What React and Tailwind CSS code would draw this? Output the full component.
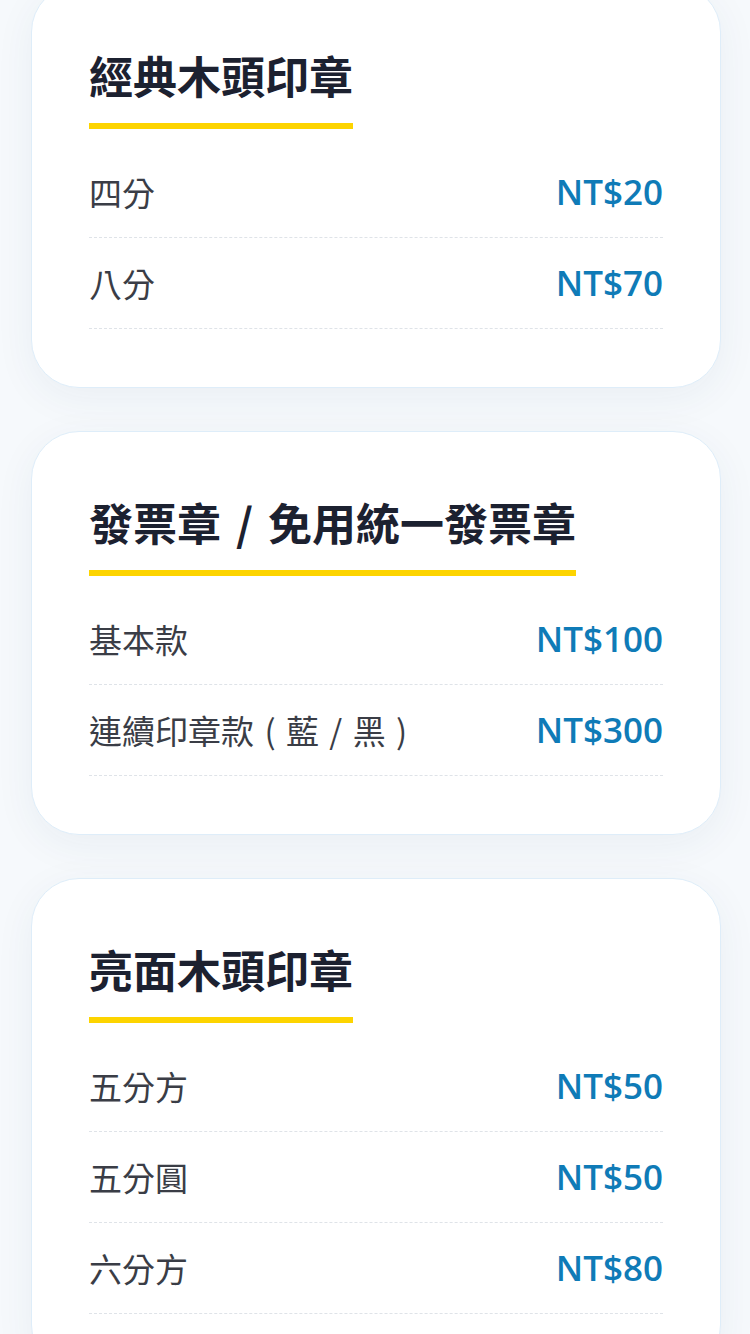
import React from "react";

const sections = [
  {
    title: "經典木頭印章",
    items: [
      ["四分", "NT$20"],
      ["八分", "NT$70"],
    ],
  },
  {
    title: "發票章 / 免用統一發票章",
    items: [
      ["基本款", "NT$100"],
      ["連續印章款 ( 藍 / 黑 )", "NT$300"],
    ],
  },
  {
    title: "亮面木頭印章",
    items: [
      ["五分方", "NT$50"],
      ["五分圓", "NT$50"],
      ["六分方", "NT$80"],
    ],
  },
];

const cjk = { fontFamily: '"Noto Sans CJK TC", "Noto Sans", sans-serif' };
const num = { fontFamily: '"Open Sans", "Noto Sans", sans-serif' };

export default function App() {
  return (
    <div className="w-[750px] h-[1334px] overflow-hidden bg-[#f6f9fc]">
      <div className="flex flex-col gap-[43px] pl-[31px] pr-[29px] mt-[-16px]">
        {sections.map((s) => (
          <div
            key={s.title}
            className="bg-white rounded-[48px] border border-[#deedf9] shadow-[0_10px_40px_rgba(30,60,100,0.06)] px-[57px] pt-[57px] pb-[58px]"
          >
            <div className="flex">
              <h2
                style={cjk}
                className="text-[44px] leading-[66px] font-bold text-[#1c2130] pb-[15px] border-b-[6px] border-[#fdd400] [word-spacing:5px]"
              >
                {s.title}
              </h2>
            </div>
            <div className="mt-[18px] flex flex-col">
              {s.items.map(([label, price]) => (
                <div
                  key={label}
                  className="flex items-center justify-between py-[21px] border-b border-dashed border-[#dfe3e8]"
                >
                  <span style={cjk} className="text-[33px] leading-[48px] text-[#3a3d46] [word-spacing:3px]">
                    {label}
                  </span>
                  <span style={num} className="text-[35px] leading-[48px] font-semibold text-[#0f7bb7]">
                    {price}
                  </span>
                </div>
              ))}
            </div>
          </div>
        ))}
      </div>
    </div>
  );
}
